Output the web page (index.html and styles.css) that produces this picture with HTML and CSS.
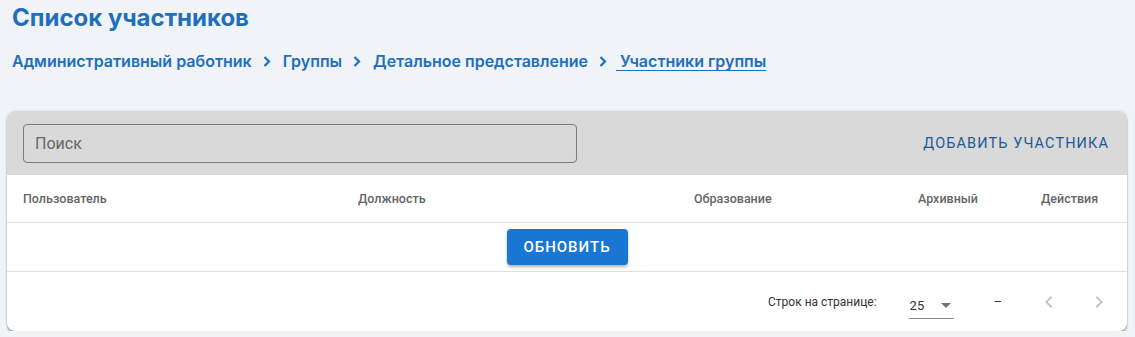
FILE: index.html
```html
<!DOCTYPE html>
<html lang="ru">
<head>
    <meta charset="UTF-8">
    <meta name="viewport" content="width=device-width, initial-scale=1.0">
    <title>Список участников</title>
    <link rel="stylesheet" href="styles.css">
</head>
<body>
    <h1 class="titulo">Список участников</h1>

    <nav class="migalhas">
        <a href="#">Административный работник</a>
        <svg class="seta" width="8" height="11" viewBox="0 0 8 11"><path d="M1.5 1 L6 5.5 L1.5 10" fill="none" stroke="#1f6fbb" stroke-width="2.2"/></svg>
        <a href="#">Группы</a>
        <svg class="seta" width="8" height="11" viewBox="0 0 8 11"><path d="M1.5 1 L6 5.5 L1.5 10" fill="none" stroke="#1f6fbb" stroke-width="2.2"/></svg>
        <a href="#">Детальное представление</a>
        <svg class="seta" width="8" height="11" viewBox="0 0 8 11"><path d="M1.5 1 L6 5.5 L1.5 10" fill="none" stroke="#1f6fbb" stroke-width="2.2"/></svg>
        <a href="#" class="atual">&nbsp;Участники группы</a>
    </nav>

    <div class="cartao">
        <div class="barra">
            <input type="text" class="busca" placeholder="Поиск">
            <button class="adicionar">Добавить участника</button>
        </div>

        <div class="linha cabecalho">
            <span>Пользователь</span>
            <span>Должность</span>
            <span>Образование</span>
            <span>Архивный</span>
            <span>Действия</span>
        </div>

        <div class="vazio">
            <button class="atualizar">Обновить</button>
        </div>

        <div class="rodape">
            <span class="rotulo">Строк на странице:</span>
            <div class="seletor">
                <span>25</span>
                <svg width="10" height="5" viewBox="0 0 10 5"><path d="M0 0 L10 0 L5 5 Z" fill="#757575"/></svg>
            </div>
            <span class="contagem">–</span>
            <div class="paginas">
                <svg width="24" height="24" viewBox="0 0 24 24"><path d="M15.4 7.4 14 6l-6 6 6 6 1.4-1.4L10.8 12z" fill="#c4c4c4"/></svg>
                <svg width="24" height="24" viewBox="0 0 24 24"><path d="M10 6 8.6 7.4 13.2 12l-4.6 4.6L10 18l6-6z" fill="#c4c4c4"/></svg>
            </div>
        </div>
    </div>
</body>
</html>
```

FILE: styles.css
```css
body {
    margin: 0;
    padding: 0 8px 0 7px;
    background-color: #f0f4f8;
    font-family: Inter, "Noto Sans", sans-serif;
}
.titulo {
    margin: 0;
    padding: 3px 0 0 5px;
    font-size: 24px;
    font-weight: 700;
    line-height: 30px;
    color: #1f6fbb;
}
.migalhas {
    display: flex;
    align-items: center;
    padding: 17px 0 0 5px;
    height: 22px;
    font-size: 16px;
    font-weight: 600;
}
.migalhas a {
    color: #1f6fbb;
    text-decoration: none;
}
.migalhas a.atual {
    text-decoration: underline;
    text-underline-offset: 3px;
}
.seta {
    margin: 0 12px 0 11px;
}
.seta:last-of-type {
    margin-right: 9px;
}
.cartao {
    margin-top: 39px;
    width: 1120px;
    border-radius: 8px;
    background-color: #fff;
    overflow: hidden;
    box-shadow: 0 2px 2px rgba(0, 0, 0, 0.35), 0 0 3px rgba(0, 0, 0, 0.1);
    font-family: Roboto, "Liberation Sans", sans-serif;
}
.barra {
    display: flex;
    align-items: center;
    justify-content: space-between;
    height: 64px;
    padding: 0 18px 0 16px;
    background-color: #d9d9d9;
}
.busca {
    width: 554px;
    height: 39px;
    box-sizing: border-box;
    padding: 0 11px;
    border: 1px solid #7a7a7a;
    border-radius: 4px;
    background: transparent;
    font-family: Roboto, sans-serif;
    font-size: 16px;
    color: #333;
}
.busca::placeholder {
    color: #666;
}
.adicionar {
    border: none;
    background: none;
    padding: 0;
    font-family: Roboto, sans-serif;
    font-size: 14.5px;
    letter-spacing: 1.1px;
    text-transform: uppercase;
    color: #1c5a96;
}
.linha {
    display: grid;
    grid-template-columns: 335px 336px 224px 123px 1fr;
    padding-left: 16px;
}
.cabecalho {
    height: 47px;
    align-items: center;
    border-bottom: 1px solid #e0e0e0;
    font-size: 12.5px;
    font-weight: 500;
    color: #666;
}
.vazio {
    display: flex;
    justify-content: center;
    align-items: center;
    height: 48px;
    border-bottom: 1px solid #e0e0e0;
}
.atualizar {
    width: 121px;
    height: 36px;
    border: none;
    border-radius: 4px;
    background-color: #1976d2;
    color: #fff;
    font-family: Roboto, sans-serif;
    font-size: 15px;
    font-weight: 500;
    letter-spacing: 1px;
    text-transform: uppercase;
    box-shadow: 0 2px 3px rgba(0, 0, 0, 0.3);
}
.rodape {
    display: flex;
    align-items: center;
    height: 59px;
    font-size: 12px;
    color: #333;
}
.rotulo {
    margin-left: 761px;
}
.seletor {
    display: flex;
    align-items: center;
    justify-content: space-between;
    margin-left: 32px;
    width: 45px;
    height: 30px;
    box-sizing: border-box;
    padding: 4px 3px 0 1px;
    border-bottom: 1px solid #8a8a8a;
    font-size: 13px;
    position: relative;
    top: 2px;
}
.contagem {
    margin-left: 40px;
    font-size: 13px;
}
.paginas {
    display: flex;
    gap: 26px;
    margin-left: 35px;
}
```
